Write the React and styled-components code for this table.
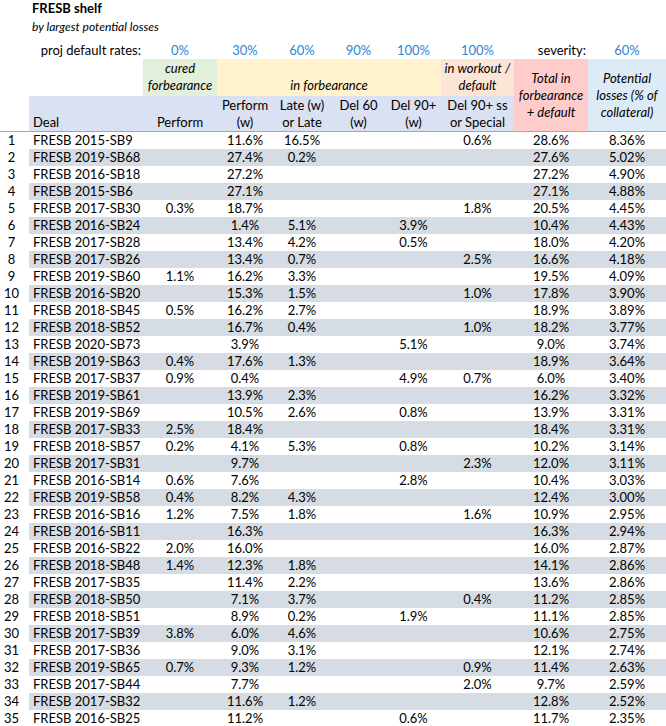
import React from 'react';
import styled, { createGlobalStyle } from 'styled-components';

// column widths after the row index: deal, cured, perform(w), late, del60, del90, del90ss, total, losses
const COLS = '114px 74px 56px 58px 55px 55px 73px 74px 78px';

const rates = ['0%', '30%', '60%', '90%', '100%', '100%'];

const deals = [
    ['FRESB 2015-SB9', '', '11.6%', '16.5%', '', '', '0.6%', '28.6%', '8.36%'],
    ['FRESB 2019-SB68', '', '27.4%', '0.2%', '', '', '', '27.6%', '5.02%'],
    ['FRESB 2016-SB18', '', '27.2%', '', '', '', '', '27.2%', '4.90%'],
    ['FRESB 2015-SB6', '', '27.1%', '', '', '', '', '27.1%', '4.88%'],
    ['FRESB 2017-SB30', '0.3%', '18.7%', '', '', '', '1.8%', '20.5%', '4.45%'],
    ['FRESB 2016-SB24', '', '1.4%', '5.1%', '', '3.9%', '', '10.4%', '4.43%'],
    ['FRESB 2017-SB28', '', '13.4%', '4.2%', '', '0.5%', '', '18.0%', '4.20%'],
    ['FRESB 2017-SB26', '', '13.4%', '0.7%', '', '', '2.5%', '16.6%', '4.18%'],
    ['FRESB 2019-SB60', '1.1%', '16.2%', '3.3%', '', '', '', '19.5%', '4.09%'],
    ['FRESB 2016-SB20', '', '15.3%', '1.5%', '', '', '1.0%', '17.8%', '3.90%'],
    ['FRESB 2018-SB45', '0.5%', '16.2%', '2.7%', '', '', '', '18.9%', '3.89%'],
    ['FRESB 2018-SB52', '', '16.7%', '0.4%', '', '', '1.0%', '18.2%', '3.77%'],
    ['FRESB 2020-SB73', '', '3.9%', '', '', '5.1%', '', '9.0%', '3.74%'],
    ['FRESB 2019-SB63', '0.4%', '17.6%', '1.3%', '', '', '', '18.9%', '3.64%'],
    ['FRESB 2017-SB37', '0.9%', '0.4%', '', '', '4.9%', '0.7%', '6.0%', '3.40%'],
    ['FRESB 2019-SB61', '', '13.9%', '2.3%', '', '', '', '16.2%', '3.32%'],
    ['FRESB 2019-SB69', '', '10.5%', '2.6%', '', '0.8%', '', '13.9%', '3.31%'],
    ['FRESB 2017-SB33', '2.5%', '18.4%', '', '', '', '', '18.4%', '3.31%'],
    ['FRESB 2018-SB57', '0.2%', '4.1%', '5.3%', '', '0.8%', '', '10.2%', '3.14%'],
    ['FRESB 2017-SB31', '', '9.7%', '', '', '', '2.3%', '12.0%', '3.11%'],
    ['FRESB 2016-SB14', '0.6%', '7.6%', '', '', '2.8%', '', '10.4%', '3.03%'],
    ['FRESB 2019-SB58', '0.4%', '8.2%', '4.3%', '', '', '', '12.4%', '3.00%'],
    ['FRESB 2016-SB16', '1.2%', '7.5%', '1.8%', '', '', '1.6%', '10.9%', '2.95%'],
    ['FRESB 2016-SB11', '', '16.3%', '', '', '', '', '16.3%', '2.94%'],
    ['FRESB 2016-SB22', '2.0%', '16.0%', '', '', '', '', '16.0%', '2.87%'],
    ['FRESB 2018-SB48', '1.4%', '12.3%', '1.8%', '', '', '', '14.1%', '2.86%'],
    ['FRESB 2017-SB35', '', '11.4%', '2.2%', '', '', '', '13.6%', '2.86%'],
    ['FRESB 2018-SB50', '', '7.1%', '3.7%', '', '', '0.4%', '11.2%', '2.85%'],
    ['FRESB 2018-SB51', '', '8.9%', '0.2%', '', '1.9%', '', '11.1%', '2.85%'],
    ['FRESB 2017-SB39', '3.8%', '6.0%', '4.6%', '', '', '', '10.6%', '2.75%'],
    ['FRESB 2017-SB36', '', '9.0%', '3.1%', '', '', '', '12.1%', '2.74%'],
    ['FRESB 2019-SB65', '0.7%', '9.3%', '1.2%', '', '', '0.9%', '11.4%', '2.63%'],
    ['FRESB 2017-SB44', '', '7.7%', '', '', '', '2.0%', '9.7%', '2.59%'],
    ['FRESB 2017-SB32', '', '11.6%', '1.2%', '', '', '', '12.8%', '2.52%'],
    ['FRESB 2016-SB25', '', '11.2%', '', '', '0.6%', '', '11.7%', '2.35%'],
];

export default function App() {
    return (
        <Sheet>
            <GlobalStyle />
            <Title>FRESB shelf</Title>
            <Subtitle>by largest potential losses</Subtitle>

            <RatesRow>
                <span />
                <Label>proj default rates:</Label>
                {rates.map((r, i) => (
                    <Rate key={i}>{r}</Rate>
                ))}
                <Label>severity:</Label>
                <Rate>60%</Rate>
            </RatesRow>

            <Header>
                <Group $col="3" $bg="#e2efda">
                    <span>cured</span>
                    <span>forbearance</span>
                </Group>
                <Group $col="4 / span 4" $bg="#fff2cc">
                    <span>in forbearance</span>
                </Group>
                <Group $col="8" $bg="#fce4d6">
                    <span>in workout /</span>
                    <span>default</span>
                </Group>
                <Tall $col="9" $bg="#ffcccc">
                    <span>Total in</span>
                    <span>forbearance</span>
                    <span>+ default</span>
                </Tall>
                <Tall $col="10" $bg="#ddebf7">
                    <span>Potential</span>
                    <span>losses (% of</span>
                    <span>collateral)</span>
                </Tall>

                <ColHead $col="2" $left>Deal</ColHead>
                <ColHead $col="3">Perform</ColHead>
                <ColHead $col="4"><span>Perform</span><span>(w)</span></ColHead>
                <ColHead $col="5"><span>Late (w)</span><span>or Late</span></ColHead>
                <ColHead $col="6"><span>Del 60</span><span>(w)</span></ColHead>
                <ColHead $col="7"><span>Del 90+</span><span>(w)</span></ColHead>
                <ColHead $col="8"><span>Del 90+ ss</span><span>or Special</span></ColHead>
            </Header>

            {deals.map(([name, ...vals], i) => (
                <Row key={name}>
                    <Index>{i + 1}</Index>
                    <RowBody $stripe={i % 2 === 1}>
                        <DealName>{name}</DealName>
                        {vals.map((v, j) => (
                            <Num key={j}>{v}</Num>
                        ))}
                    </RowBody>
                </Row>
            ))}
        </Sheet>
    );
}

const GlobalStyle = createGlobalStyle`
    body {
        margin: 0;
        background: #fff;
        color: #000;
        font-family: Lato, "Liberation Sans", sans-serif;
    }
`;

const Sheet = styled.div`
    width: 666px;
    font-size: 13px;
    line-height: 17px;
`;

const Title = styled.div`
    height: 17px;
    padding-left: 32px;
    font-weight: bold;
`;

const Subtitle = styled.div`
    height: 17px;
    padding-left: 32px;
    padding-top: 1px;
    font-style: italic;
    font-size: 12px;
`;

const RatesRow = styled.div`
    display: grid;
    grid-template-columns: 29px ${COLS};
    height: 17px;
    margin-top: 7px;
`;

const Label = styled.span`
    text-align: right;
    padding-right: 2px;
    white-space: nowrap;
`;

const Rate = styled.span`
    text-align: center;
    color: #2a86d8;
`;

const Header = styled.div`
    display: grid;
    grid-template-columns: 29px ${COLS};
    grid-template-rows: 37px 35px;
    border-bottom: 1px solid #a6a6a6;
`;

const Group = styled.div`
    grid-column: ${p => p.$col};
    grid-row: 1;
    display: flex;
    flex-direction: column;
    justify-content: flex-end;
    align-items: center;
    padding-bottom: 2px;
    background: ${p => p.$bg};
    font-style: italic;
    white-space: nowrap;
`;

const Tall = styled.div`
    grid-column: ${p => p.$col};
    grid-row: 1 / span 2;
    display: flex;
    flex-direction: column;
    justify-content: center;
    align-items: center;
    background: ${p => p.$bg};
    font-style: italic;
    white-space: nowrap;
`;

const ColHead = styled.div`
    grid-column: ${p => p.$col};
    grid-row: 2;
    display: flex;
    flex-direction: column;
    justify-content: flex-end;
    align-items: ${p => (p.$left ? 'flex-start' : 'center')};
    padding-left: ${p => (p.$left ? '4px' : '0')};
    background: #d9e1f2;
    white-space: nowrap;
`;

const Row = styled.div`
    display: flex;
    height: 17px;
`;

const Index = styled.div`
    width: 23px;
    margin-right: 6px;
    text-align: center;
`;

const RowBody = styled.div`
    flex: 1;
    display: grid;
    grid-template-columns: ${COLS};
    background: ${p => (p.$stripe ? '#d6dce4' : 'transparent')};
`;

const DealName = styled.div`
    padding-left: 4px;
    white-space: nowrap;
`;

const Num = styled.div`
    text-align: center;
`;
